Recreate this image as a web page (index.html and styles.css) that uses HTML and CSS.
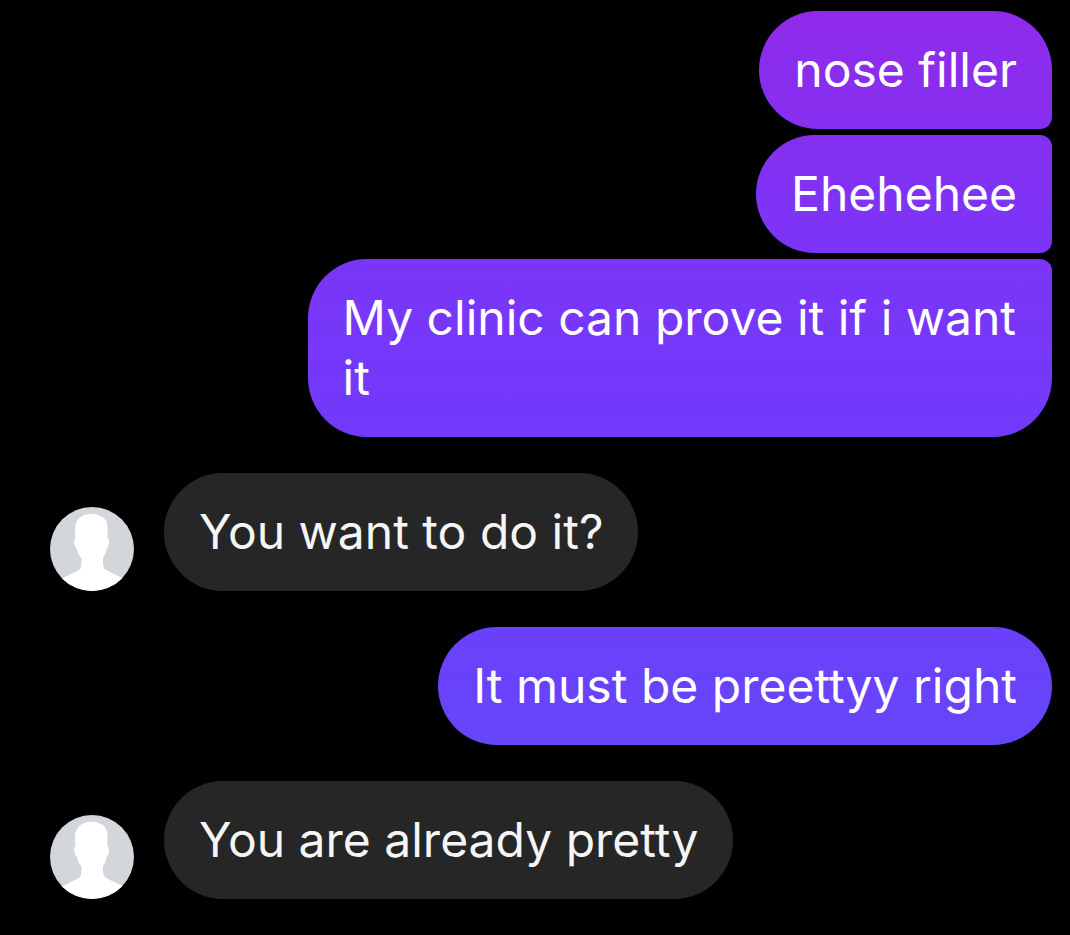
FILE: index.html
```html
<!DOCTYPE html>
<html lang="en">
<head>
    <meta charset="UTF-8">
    <meta name="viewport" content="width=device-width, initial-scale=1.0">
    <title>Chat</title>
    <link rel="stylesheet" href="styles.css">
</head>
<body>
    <!-- shared silhouette for the avatars -->
    <svg class="sprite" aria-hidden="true">
        <symbol id="person" viewBox="0 0 84 84">
            <rect width="84" height="84" fill="#d3d6db"/>
            <path fill="#fff" d="M40 7C44 6.500 47 7 49 8.500C54 9 58 14 57.500 22L57.500 31.500C60 32 59.500 39 56.500 42C56 46 54.500 49 53 51V57C53.500 60 54 62 56 63C61 66 66 67.500 71 70.500L76 74V84H8V74L14 70.500C19 67.500 25 65.500 29 63C30.500 62 31 60 31.500 57V51C29 49 27.500 46 27 42C24 39 23 32 25.500 31.500L25 22C25 13 31 7.500 40 7Z"/>
        </symbol>
    </svg>

    <main class="chat">
        <div class="group sent">
            <p class="bubble">nose filler</p>
            <p class="bubble">Ehehehee</p>
            <p class="bubble">My clinic can prove it if i want it</p>
        </div>
        <div class="group received">
            <svg class="avatar"><use href="#person"/></svg>
            <p class="bubble">You want to do it?</p>
        </div>
        <div class="group sent">
            <p class="bubble">It must be preettyy right</p>
        </div>
        <div class="group received">
            <svg class="avatar"><use href="#person"/></svg>
            <p class="bubble">You are already pretty</p>
        </div>
    </main>
</body>
</html>
```
FILE: styles.css
```css
* {
    box-sizing: border-box;
}
body {
    margin: 0;
    background: #000;
    color: #fff;
    font-family: Inter, "Noto Sans", sans-serif;
    font-size: 48px;
    line-height: 60px;
}
.sprite {
    position: absolute;
    width: 0;
    height: 0;
}
.chat {
    display: flex;
    flex-direction: column;
    gap: 36px;
    padding: 11px 18px 36px;
}
.group {
    display: flex;
}
.bubble {
    max-width: 72%;
    margin: 0;
    padding: 29px 35px;
    border-radius: 59px;
}
.sent {
    flex-direction: column;
    align-items: flex-end;
    gap: 6px;
}
/* the gradient runs down the whole window, not each bubble */
.sent .bubble {
    background: linear-gradient(#902ae9 0%, #7b35f8 27%, #713afb 47%, #6645fa 80%, #5f4bfa 100%) fixed;
}
.sent .bubble:not(:last-child) {
    border-bottom-right-radius: 12px;
}
.sent .bubble:not(:first-child) {
    border-top-right-radius: 12px;
}
.received {
    align-items: flex-end;
    gap: 30px;
    padding-left: 32px;
}
.received .bubble {
    background: #262626;
    color: #f5f5f5;
}
.avatar {
    flex: none;
    width: 84px;
    height: 84px;
    border-radius: 50%;
}
```
